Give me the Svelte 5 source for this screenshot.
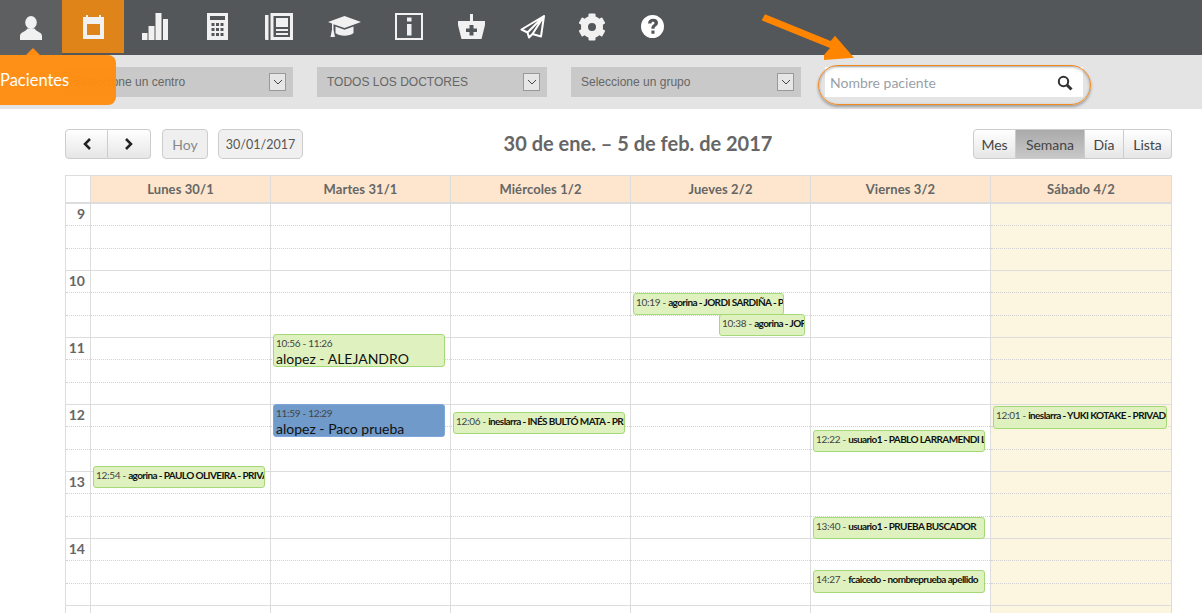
<script lang="ts">
	const navItems = [
		{ id: 'user', w: 62 },
		{ id: 'calendar', w: 62, active: true },
		{ id: 'chart', w: 62 },
		{ id: 'calc', w: 62 },
		{ id: 'news', w: 62 },
		{ id: 'grad', w: 68 },
		{ id: 'info', w: 62 },
		{ id: 'basket', w: 62 },
		{ id: 'plane', w: 60 },
		{ id: 'gear', w: 60 },
		{ id: 'help', w: 60 }
	];

	const selects = ['Seleccione un centro', 'TODOS LOS DOCTORES', 'Seleccione un grupo'];
	const hours = [9, 10, 11, 12, 13, 14, 15];
	const teeth = [0, 60, 120, 180, 240, 300];

	// left/top are px inside the day column (67px per hour, from 9:00)
	const days = [
		{
			label: 'Lunes 30/1',
			events: [{ time: '12:54', who: 'agorina - PAULO OLIVEIRA - PRIVADO', top: 262, left: 2, w: 172, h: 22 }]
		},
		{
			label: 'Martes 31/1',
			events: [
				{ time: '10:56 - 11:26', who: 'alopez - ALEJANDRO', top: 130, left: 2, w: 172, h: 33, big: true },
				{ time: '11:59 - 12:29', who: 'alopez - Paco prueba', top: 200, left: 2, w: 172, h: 33, big: true, blue: true }
			]
		},
		{
			label: 'Miércoles 1/2',
			events: [{ time: '12:06', who: 'ineslarra - INÉS BULTÓ MATA - PRIVADO', top: 208, left: 2, w: 172, h: 22 }]
		},
		{
			label: 'Jueves 2/2',
			events: [
				{ time: '10:19', who: 'agorina - JORDI SARDIÑA - PRIVADO', top: 89, left: 2, w: 151, h: 22 },
				{ time: '10:38', who: 'agorina - JORDI SARDIÑA', top: 110, left: 88, w: 86, h: 22 }
			]
		},
		{
			label: 'Viernes 3/2',
			events: [
				{ time: '12:22', who: 'usuario1 - PABLO LARRAMENDI LOPEZ', top: 226, left: 2, w: 172, h: 22 },
				{ time: '13:40', who: 'usuario1 - PRUEBA BUSCADOR', top: 313, left: 2, w: 172, h: 22 },
				{ time: '14:27', who: 'fcaicedo - nombreprueba apellido', top: 366, left: 2, w: 172, h: 23 }
			]
		},
		{
			label: 'Sábado 4/2',
			weekend: true,
			events: [{ time: '12:01', who: 'ineslarra - YUKI KOTAKE - PRIVADO', top: 202, left: 2, w: 174, h: 23 }]
		}
	];
</script>

{#snippet navIcon(id: string)}
	{#if id === 'user'}
		<svg width="22" height="24" viewBox="0 0 22 24"><ellipse cx="11" cy="6.5" rx="5.8" ry="6.5" /><path d="M0 24v-4c0-4 6-4.500 7.500-7.500h7C16 15.500 22 16 22 20v4z" /></svg>
	{:else if id === 'calendar'}
		<svg width="21" height="24" viewBox="0 0 21 24"><path fill-rule="evenodd" d="M0 2h3V0h2v2h11V0h2v2h3v22H0zM4 9v11h13V9z" /></svg>
	{:else if id === 'chart'}
		<svg width="26" height="27" viewBox="0 0 26 27"><path d="M0 20h5.500v7H0zM6.500 13h6v14h-6zM13.500 0h6v27h-6zM21 6h5v21h-5z" /></svg>
	{:else if id === 'calc'}
		<svg width="21" height="27" viewBox="0 0 21 27"><path fill-rule="evenodd" d="M0 0h21v27H0zM3 3v4h15V3zM4.500 10v3h3v-3zM9 10v3h3v-3zM13.500 10v3h3v-3zM4.500 15v3h3v-3zM9 15v3h3v-3zM13.500 15v3h3v-3zM4.500 20v3h3v-3zM9 20v3h3v-3zM13.500 20v3h3v-3z" /></svg>
	{:else if id === 'news'}
		<svg width="28" height="27" viewBox="0 0 28 27"><path fill-rule="evenodd" d="M0 2h3.500v25H1a1 1 0 0 1-1-1zM5.500 0H28v27H5.500zM8.500 3v21H25V3zM11 5h12v9H11zM11 16h12v2H11zM11 20h12v2H11z" /></svg>
	{:else if id === 'grad'}
		<svg width="33" height="21" viewBox="0 0 33 21"><path d="M16.500 0L33 6 16.500 12 5.500 8.200v5.300L7 21H2.500L4 13.500V7.500L0 6zM7.500 10.500l9 3.200 9-3.200V17c-4 3.500-14 3.500-18 0z" /></svg>
	{:else if id === 'info'}
		<svg width="28" height="27" viewBox="0 0 28 27"><path fill-rule="evenodd" d="M0 0h28v27H0zM2 2v23h24V2zM12 4.500h4.500v4H12zM12 11h4.500v11.500H12z" /></svg>
	{:else if id === 'basket'}
		<svg width="27" height="25" viewBox="0 0 27 25"><path fill-rule="evenodd" d="M12 0h3v7h12v4l-3.500 14h-20L0 11V7h12zM11.500 11v3.500H8v3.500h3.500v3.500h4V18H19v-3.500h-3.500V11z" /></svg>
	{:else if id === 'plane'}
		<svg class="outline" width="25" height="24" viewBox="0 0 25 24"><path d="M24 1L1.500 14.500 7.500 17.500 9 22.500 12.500 19 21 21.500zM24 1L7.500 17.500M24 1L12.500 19" /></svg>
	{:else if id === 'gear'}
		<svg width="28" height="28" viewBox="0 0 28 28">
			<circle class="ring" cx="14" cy="14" r="7.500" />
			{#each teeth as deg}
				<rect x="10.500" y="0.500" width="7" height="6" rx="1" transform="rotate({deg} 14 14)" />
			{/each}
		</svg>
	{:else if id === 'help'}
		<svg width="23" height="23" viewBox="0 0 23 23"><path fill="#fff" fill-rule="evenodd" d="M11.500 0a11.500 11.500 0 1 1 0 23 11.500 11.500 0 0 1 0-23zM7 8.500h3.300c.2-1.200.8-1.800 1.700-1.800s1.500.5 1.500 1.300c0 1.700-3.100 2-3.100 5v.7h3.100c0-2.400 3.500-2.600 3.500-5.900 0-2.500-2-4-4.700-4C9 3.800 7.200 5.500 7 8.500zM10.400 15.500v3.200h3.100v-3.200z" /></svg>
	{/if}
{/snippet}

<div class="page">
	<nav class="topbar">
		{#each navItems as item, i}
			<div class="nav-item" class:active={item.active} class:first={i === 0} style="width: {item.w}px">
				{@render navIcon(item.id)}
			</div>
		{/each}
	</nav>

	<div class="filters">
		{#each selects as label}
			<div class="select">
				<span>{label}</span>
				<div class="caret">
					<svg width="10" height="6" viewBox="0 0 10 6"><path d="M1 1l4 4 4-4" /></svg>
				</div>
			</div>
		{/each}
		<div class="search">
			<span>Nombre paciente</span>
			<svg width="16" height="16" viewBox="0 0 16 16"><circle cx="6.500" cy="6.500" r="4.700" /><path class="handle" d="M10 10l4.500 4.500" /></svg>
			<div class="ring-mark"></div>
		</div>
	</div>

	<div class="tip"><span>Pacientes</span></div>
	<svg class="pointer" width="100" height="50" viewBox="0 0 100 50">
		<path d="M5 .3L70.700 27 75 21.700 94 43.700 64 46 64 41 70 34 1.700 6.300z" />
	</svg>

	<main class="calendar">
		<div class="cal-bar">
			<div class="cal-left">
				<div class="btn-group">
					<button class="btn arrow"><svg width="10" height="12" viewBox="0 0 10 12"><path d="M8 1L3 6l5 5" /></svg></button>
					<button class="btn arrow"><svg width="10" height="12" viewBox="0 0 10 12"><path d="M2 1l5 5-5 5" /></svg></button>
				</div>
				<button class="btn today">Hoy</button>
				<button class="btn date">30/01/2017</button>
			</div>
			<h2>30 de ene. – 5 de feb. de 2017</h2>
			<div class="btn-group views">
				<button class="btn">Mes</button>
				<button class="btn on">Semana</button>
				<button class="btn">Día</button>
				<button class="btn">Lista</button>
			</div>
		</div>

		<div class="table">
			<div class="head corner"></div>
			{#each days as day}
				<div class="head">{day.label}</div>
			{/each}

			<div class="axis">
				{#each hours as h}
					<div class="hour">
						<i><span class="label">{h < 15 ? h : ''}</span></i><i></i><i></i>
					</div>
				{/each}
			</div>
			{#each days as day}
				<div class="day" class:weekend={day.weekend}>
					{#each hours as h}
						<div class="hour"><i></i><i></i><i></i></div>
					{/each}
					{#each day.events as ev}
						<div
							class="event"
							class:big={ev.big}
							class:blue={ev.blue}
							style="top: {ev.top}px; left: {ev.left}px; width: {ev.w}px; height: {ev.h}px"
						>
							{#if ev.big}
								<div class="ev-time">{ev.time}</div>
								<div class="ev-who">{ev.who}</div>
							{:else}
								<span class="ev-time">{`${ev.time} - `}</span><span class="ev-who">{ev.who}</span>
							{/if}
						</div>
					{/each}
				</div>
			{/each}
		</div>
	</main>
</div>

<style>
	:global(body) {
		margin: 0;
		background: #fff;
	}

	.page {
		position: relative;
		width: 1202px;
		height: 613px;
		overflow: hidden;
		font-family: Lato, 'Open Sans', sans-serif;
		color: #555;
	}

	.topbar {
		display: flex;
		height: 55px;
		background: #54575a;
	}

	.nav-item {
		display: flex;
		align-items: center;
		justify-content: center;
		height: 53px;
	}

	.nav-item svg {
		fill: #f1f1f1;
	}

	.nav-item svg.outline {
		fill: none;
		stroke: #fff;
		stroke-width: 2;
		stroke-linejoin: round;
	}

	.nav-item .ring {
		fill: none;
		stroke: #f1f1f1;
		stroke-width: 7;
	}

	.nav-item.first {
		height: 55px;
		background: #5d5f61;
	}

	.nav-item.active {
		background: #df8418;
	}

	.filters {
		display: flex;
		align-items: center;
		height: 54px;
		padding-left: 63px;
		background: #e4e4e4;
		gap: 24px;
	}

	.select {
		display: flex;
		align-items: center;
		justify-content: space-between;
		box-sizing: border-box;
		width: 230px;
		height: 30px;
		padding: 0 7px 0 10px;
		background: #c9c9c9;
		font-family: 'Liberation Sans', sans-serif;
		font-size: 12px;
		color: #666;
	}

	.caret {
		display: flex;
		align-items: center;
		justify-content: center;
		box-sizing: border-box;
		width: 17px;
		height: 18px;
		border: 1px solid #999;
		background: #e6e6e6;
	}

	.caret svg {
		fill: none;
		stroke: #444;
		stroke-width: 1;
	}

	.search {
		position: relative;
		display: flex;
		align-items: center;
		justify-content: space-between;
		box-sizing: border-box;
		width: 258px;
		height: 30px;
		padding: 1px 10px 0 5px;
		background: #fff;
		font-size: 14px;
		color: #9a9fa8;
	}

	.search circle,
	.search .handle {
		fill: none;
		stroke: #333;
		stroke-width: 2;
	}

	.search .handle {
		stroke-width: 3;
	}

	/* hand-drawn highlight round the search box */
	.ring-mark {
		position: absolute;
		top: -2px;
		left: -7px;
		box-sizing: border-box;
		width: 273px;
		height: 40px;
		border: 1.500px solid #f58a1c;
		border-radius: 20px;
		box-shadow:
			0 2px 3px rgba(0, 0, 0, 0.3),
			inset 0 1px 3px rgba(0, 0, 0, 0.3);
	}

	.tip {
		position: absolute;
		top: 55px;
		left: 0;
		display: flex;
		align-items: center;
		width: 116px;
		height: 50px;
		border-radius: 0 8px 8px 0;
		background: rgba(255, 140, 16, 0.96);
		font-size: 16.500px;
		color: #fff;
	}

	.tip::before {
		content: '';
		position: absolute;
		top: -7px;
		left: 26px;
		border: 7.500px solid transparent;
		border-top: 0;
		border-bottom-color: #ff8c10;
	}

	.pointer {
		position: absolute;
		top: 14px;
		left: 760px;
	}

	.pointer path {
		fill: #ff8400;
	}

	.calendar {
		padding: 20px 30px 0 65px;
	}

	.cal-bar {
		display: flex;
		align-items: center;
		justify-content: space-between;
		height: 30px;
		margin-bottom: 16px;
	}

	.cal-left {
		display: flex;
		gap: 10px;
		width: 238px;
	}

	.btn-group {
		display: flex;
		margin-right: 1px;
	}

	.views {
		display: grid;
		grid-template-columns: 43px 69px 39px 48px;
		margin-right: 0;
	}

	h2 {
		margin: 0;
		padding-bottom: 3px;
		font-size: 20px;
		font-weight: 700;
		color: #666;
	}

	.btn {
		height: 30px;
		padding: 0;
		border: 1px solid #ccc;
		border-radius: 0;
		background: linear-gradient(#fff, #e6e6e6);
		font-family: inherit;
		font-size: 14px;
		color: #444;
	}

	.btn-group .btn + .btn {
		border-left: 0;
	}

	.btn-group .btn:first-child {
		border-radius: 4px 0 0 4px;
	}

	.btn-group .btn:last-child {
		border-radius: 0 4px 4px 0;
	}

	.btn.arrow {
		display: flex;
		align-items: center;
		justify-content: center;
		width: 43px;
	}

	.arrow svg {
		fill: none;
		stroke: #222;
		stroke-width: 2.500;
	}

	.today {
		width: 46px;
		border-radius: 4px;
		background: #efefef;
		color: #888;
	}

	.date {
		width: 85px;
		border-radius: 5px;
		background: #f0f0f0;
		font-size: 12.500px;
		color: #555;
	}

	.btn.on {
		background: linear-gradient(#aaa, #c8c8c8);
		color: #444;
	}

	.table {
		display: grid;
		grid-template-columns: 24px repeat(5, 180px) 181px;
		border-right: 1px solid #ddd;
		border-left: 1px solid #ddd;
	}

	.head {
		display: flex;
		align-items: center;
		justify-content: center;
		box-sizing: border-box;
		height: 29px;
		padding-bottom: 1px;
		border-top: 1px solid #ddd;
		border-bottom: 2px solid #ddd;
		border-left: 1px solid #ddd;
		background: #fde6cd;
		font-size: 13px;
		font-weight: 700;
		letter-spacing: 0.1px;
		color: #666;
	}

	.head.corner {
		border-left: 0;
		background: #fff;
	}

	.label {
		display: block;
		padding: 2px 5px 0 0;
		font-size: 14px;
		font-weight: 700;
		font-style: normal;
		line-height: 16px;
		text-align: right;
		color: #666;
	}

	.day {
		position: relative;
		border-left: 1px solid #ddd;
	}

	.weekend {
		background: #fcf6e1;
	}

	.hour {
		display: grid;
		grid-template-rows: 22px 23px 22px;
		box-sizing: border-box;
		height: 67px;
		border-bottom: 1px solid #ddd;
	}

	.hour i {
		border-bottom: 1px dotted #d2d2d2;
	}

	.hour i:last-child {
		border-bottom: 0;
	}

	.event {
		position: absolute;
		box-sizing: border-box;
		overflow: hidden;
		padding: 1px 2px;
		border: 1px solid #a5d977;
		border-radius: 3px;
		background: #dff1bf;
		white-space: nowrap;
		font-size: 10px;
		line-height: 14px;
		color: #111;
	}

	.event .ev-time {
		letter-spacing: -0.3px;
		color: #444;
	}

	.event .ev-who {
		font-weight: 700;
		letter-spacing: -0.6px;
	}

	.event.big .ev-who {
		font-size: 14px;
		font-weight: 400;
		letter-spacing: 0;
		line-height: 17px;
	}

	.event.blue {
		border-color: #7ea6dc;
		background: #6f9ac9;
	}
</style>
